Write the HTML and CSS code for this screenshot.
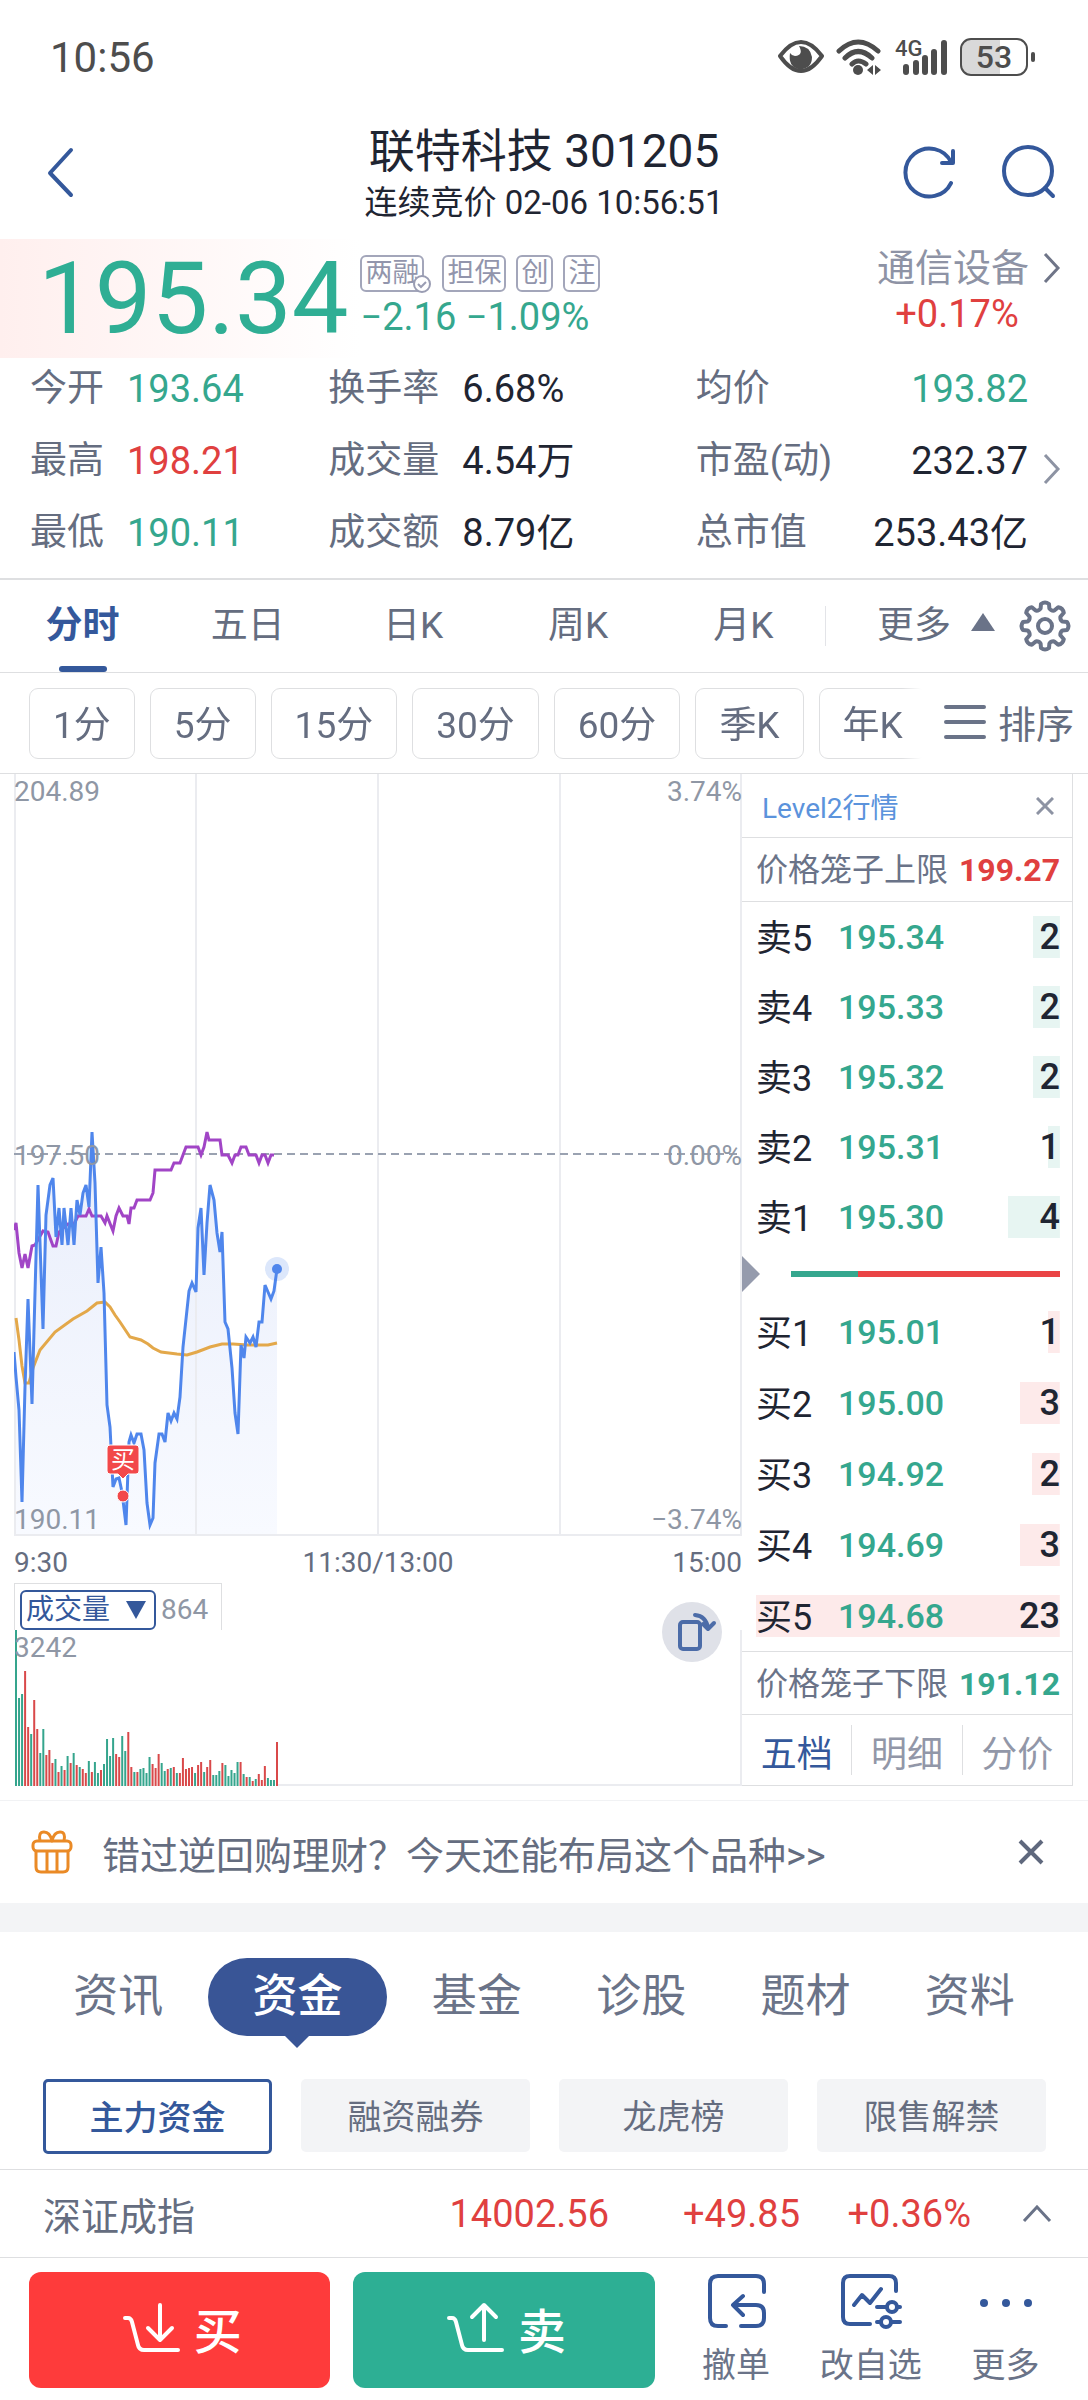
FILE: index.html
```html
<!DOCTYPE html>
<html lang="zh-CN">

<head>
    <meta charset="UTF-8">
    <meta name="viewport" content="width=device-width, initial-scale=1.0">
    <title>联特科技 301205</title>
    <link rel="stylesheet" href="styles.css">
</head>

<body>
<div class="status">
    <span class="clock">10:56</span>
    <div class="status-icons">
        <svg width="46" height="36" viewBox="0 0 46 36" fill="none" stroke="#4d4d4d" stroke-width="4">
            <path d="M2 17Q23-11 44 17Q23 47 2 17z" stroke-linejoin="round"/>
            <path d="M21 7q5 9-4 10-3 0-5-3-2 13 8 16 14 1 14-12Q32 7 21 7z" fill="#4d4d4d" stroke="none"/>
        </svg>
        <svg width="46" height="36" viewBox="0 0 46 36" fill="none" stroke="#4d4d4d" stroke-width="5" stroke-linecap="round">
            <path d="M3 12Q22-6 42 12M9 19Q22 6 36 19M16 25Q22 19 30 25"/>
            <circle cx="22" cy="31" r="5" fill="#4d4d4d" stroke="none"/>
            <path d="M37 26v10l-6-5zM39 26v10l6-5z" fill="#4d4d4d" stroke="none"/>
        </svg>
        <svg width="54" height="44" viewBox="-1 -4 54 44" stroke="#4d4d4d" stroke-width="6" stroke-linecap="round">
            <text class="net" x="0" y="17">4G</text>
            <path d="M11 28v5M21 24v9M30 19v14M39 13v20M49 4v29"/>
        </svg>
        <svg width="76" height="38" viewBox="0 0 76 38">
            <path d="M10 2h30v34H10q-8 0-8-8V10q0-8 8-8z" fill="#d9d9d9"/>
            <rect x="1" y="1" width="66" height="36" rx="10" fill="none" stroke="#4d4d4d" stroke-width="2"/>
            <path d="M73 16v6" stroke="#4d4d4d" stroke-width="4" stroke-linecap="round"/>
            <text class="battery" x="34" y="30">53</text>
        </svg>
    </div>
</div>

<header class="header">
    <button class="icon-btn back" aria-label="返回">
        <svg width="30" height="52" viewBox="0 0 30 52" fill="none" stroke="#34589b" stroke-width="4" stroke-linecap="round" stroke-linejoin="round">
            <path d="M25 3L4 26l21 22"/>
        </svg>
    </button>
    <div class="stock">
        <h1 class="stock-name">联特科技 301205</h1>
        <p class="stock-time">连续竞价 02-06 10:56:51</p>
    </div>
    <div class="header-right">
        <button class="icon-btn" aria-label="刷新">
            <svg width="56" height="56" viewBox="0 0 56 56" fill="none" stroke="#34589b" stroke-width="4" stroke-linejoin="round" stroke-linecap="round">
                <path d="M49 38A24 24 0 1 1 49 17"/>
                <path d="M51 6v12H40"/>
            </svg>
        </button>
        <button class="icon-btn" aria-label="搜索">
            <svg width="56" height="56" viewBox="0 0 56 56" fill="none" stroke="#34589b" stroke-width="4" stroke-linecap="round">
                <circle cx="28" cy="26" r="24"/>
                <path d="M45 43l8 8"/>
            </svg>
        </button>
    </div>
</header>

<section class="price-band">
    <div class="price down">195.34</div>
    <div class="price-info">
        <div class="tags">
            <span class="tag">两融<svg class="tag-check" width="18" height="18" viewBox="0 0 18 18" fill="none" stroke="#9a9db3" stroke-width="2"><circle cx="9" cy="9" r="8" fill="#fff"/><path d="M5 9l3 3 5-5"/></svg></span>
            <span class="tag">担保</span>
            <span class="tag">创</span>
            <span class="tag">注</span>
        </div>
        <div class="change down">−2.16 −1.09%</div>
    </div>
    <a class="industry" href="#">
        <span class="industry-name">通信设备</span>
        <svg width="18" height="32" viewBox="0 0 18 32" fill="none" stroke="#6f7588" stroke-width="3"><path d="M2 2l13 14L2 30"/></svg>
        <span class="industry-rate up">+0.17%</span>
    </a>
</section>

<section class="quote">
    <dl class="quote-grid">
        <div class="q"><dt>今开</dt><dd class="down">193.64</dd></div>
        <div class="q q2"><dt>换手率</dt><dd>6.68%</dd></div>
        <div class="q q3"><dt>均价</dt><dd class="down">193.82</dd></div>
        <div class="q"><dt>最高</dt><dd class="up">198.21</dd></div>
        <div class="q q2"><dt>成交量</dt><dd>4.54万</dd></div>
        <div class="q q3"><dt>市盈(动)</dt><dd>232.37</dd></div>
        <div class="q"><dt>最低</dt><dd class="down">190.11</dd></div>
        <div class="q q2"><dt>成交额</dt><dd>8.79亿</dd></div>
        <div class="q q3"><dt>总市值</dt><dd>253.43亿</dd></div>
    </dl>
    <svg class="quote-more" width="18" height="32" viewBox="0 0 18 32" fill="none" stroke="#8d93a3" stroke-width="3"><path d="M2 2l13 14L2 30"/></svg>
</section>

<nav class="periods">
    <div class="period-list">
        <button class="period active">分时</button>
        <button class="period">五日</button>
        <button class="period">日K</button>
        <button class="period">周K</button>
        <button class="period">月K</button>
    </div>
    <button class="period-more">更多
        <svg width="24" height="18" viewBox="0 0 24 18"><path d="M12 0l12 18H0z" fill="#6a7388"/></svg>
    </button>
    <button class="icon-btn" aria-label="设置">
        <svg width="52" height="52" viewBox="-26 -26 52 52" fill="none" stroke="#6a7388" stroke-width="4" stroke-linejoin="round">
            <path d="M17.5-4.4L22-4Q25 0 22 4L17.5 4.4Q15 6 15.4 9.3L18.8 13.2Q18 18 13.2 18.8L9.3 15.4Q6 15 4.4 17.5L4 22Q0 25-4 22L-4.4 17.5Q-6 15-9.3 15.4L-13.2 18.8Q-18 18-18.8 13.2L-15.4 9.3Q-15 6-17.5 4.4L-22 4Q-25 0-22-4L-17.5-4.4Q-15-6-15.4-9.3L-18.8-13.2Q-18-18-13.2-18.8L-9.3-15.4Q-6-15-4.4-17.5L-4-22Q0-25 4-22L4.4-17.5Q6-15 9.3-15.4L13.2-18.8Q18-18 18.8-13.2L15.4-9.3Q15-6 17.5-4.4z"/>
            <circle r="7"/>
        </svg>
    </button>
</nav>

<div class="minutes">
    <div class="minute-list">
        <button class="minute">1分</button>
        <button class="minute">5分</button>
        <button class="minute">15分</button>
        <button class="minute">30分</button>
        <button class="minute">60分</button>
        <button class="minute">季K</button>
        <button class="minute">年K</button>
    </div>
    <button class="sort">
        <svg width="42" height="34" viewBox="0 0 42 34" stroke="#6a7388" stroke-width="4" stroke-linecap="round"><path d="M2 2h38M2 17h38M2 32h38"/></svg>
        排序
    </button>
</div>

<main class="market">
    <div class="charts">
        <!-- 分时图 -->
        <div class="trend">
            <svg class="trend-svg" viewBox="0 0 728 762" fill="none">
                <defs>
                    <linearGradient id="area" x1="0" y1="0" x2="0" y2="1">
                        <stop offset="0" stop-color="#e9eefb"/>
                        <stop offset="1" stop-color="#f8faff"/>
                    </linearGradient>
                </defs>
                <path id="priceArea" fill="url(#area)"/>
                <path d="M1 0v762M182 0v762M364 0v762M546 0v762M727 0v762M0 761h728" stroke="#ebecf0" stroke-width="2"/>
                <path d="M0 380h728" stroke="#9aa2b1" stroke-width="2" stroke-dasharray="8 5"/>
                <polyline stroke="#e3a84a" stroke-width="3" points="2,544 5,566 8,592 11,609 15,609 19,594 26,576 41,558 59,545 73,537 83,529 91,528 96,533 101,541 106,548 116,563 127,566 134,570 139,574 147,578 163,580 173,581 183,578 196,573 208,570 219,570 233,571 254,571 263,569"/>
                <polyline stroke="#a145c6" stroke-width="3" points="0,456 2,449 5,479 8,494 11,480 14,494 18,472 21,471 29,457 34,458 39,472 42,472 45,458 54,450 60,450 64,442 72,442 75,435 78,442 87,442 91,449 93,442 99,457 102,442 105,434 109,442 113,442 115,450 117,434 120,434 123,426 136,426 139,419 141,396 157,396 160,389 166,389 172,373 184,373 187,381 190,373 193,358 195,366 206,366 208,381 214,381 218,389 221,381 224,381 227,373 232,373 235,381 242,381 245,389 248,381 251,381 254,389 257,381 260,381"/>
                <polyline id="priceLine" stroke="#4f86ec" stroke-width="3" points="0,578 2,603 5,636 8,728 11,613 14,525 18,630 21,519 24,411 29,555 32,441 36,411 39,404 42,463 45,434 48,471 50,434 54,471 57,434 60,471 63,426 66,441 69,419 72,411 75,433 78,358 81,409 84,509 87,473 90,519 93,631 96,653 99,713 102,705 105,704 108,718 112,751 115,668 117,661 120,669 123,660 127,660 130,676 133,729 136,751 139,744 141,689 145,660 148,660 151,668 154,639 157,647 160,639 163,645 166,623 169,573 175,517 178,509 182,518 184,454 187,434 190,501 193,449 196,411 200,426 203,459 206,478 208,458 211,548 214,555 218,594 221,639 224,660 227,571 230,584 232,563 236,569 239,563 242,573 245,548 248,548 251,511 257,525 260,517 263,495"/>
                <circle cx="263" cy="495" r="12" fill="#4f86ec" fill-opacity=".2"/>
                <circle cx="263" cy="495" r="5" fill="#4f86ec"/>
                <path d="M96 671h26q3 0 3 3v23q0 3-3 3h-8l-5 5-5-5h-8q-3 0-3-3v-23q0-3 3-3z" fill="#f2484a" stroke="#fff"/>
                <circle cx="109" cy="722" r="6" fill="#f2484a" stroke="#fff"/>
                <text class="buy-mark" x="109" y="694">买</text>
            </svg>
            <div class="scale scale-left"><span>204.89</span><span>197.50</span><span>190.11</span></div>
            <div class="scale scale-right"><span>3.74%</span><span>0.00%</span><span>−3.74%</span></div>
        </div>
        <div class="times"><span>9:30</span><span>11:30/13:00</span><span>15:00</span></div>
        <!-- 成交量 -->
        <div class="volume">
            <div class="volume-head">
                <label class="volume-select">
                    <select aria-label="指标">
                        <option>成交量</option>
                        <option>成交额</option>
                    </select>
                    <svg width="20" height="18" viewBox="0 0 20 18"><path d="M0 0h20L10 18z" fill="#34589b"/></svg>
                </label>
                <span>864</span>
            </div>
            <div class="volume-body">
                <svg class="volume-svg" viewBox="0 0 728 156"><path d="M727 0v155M264 155h464" stroke="#ebecf0" stroke-width="2" fill="none"/><g id="bars"></g></svg>
                <span class="volume-max">3242</span>
            </div>
            <button class="rotate" aria-label="横屏">
                <svg width="60" height="60" viewBox="0 0 60 60" fill="none" stroke="#4c6ca8" stroke-width="4" stroke-linecap="round" stroke-linejoin="round">
                    <rect x="18" y="20" width="20" height="27" rx="3"/>
                    <path d="M33 13q11 1 13 13M41 22l5 5 6-6"/>
                </svg>
            </button>
        </div>
    </div>

    <!-- 五档盘口 -->
    <aside class="book">
        <div class="level2"><a href="#">Level2行情</a>
            <button class="icon-btn" aria-label="关闭"><svg width="18" height="18" viewBox="0 0 18 18" stroke="#8d93a3" stroke-width="3"><path d="M1 1l16 16M17 1L1 17"/></svg></button>
        </div>
        <div class="cage">价格笼子上限 <b class="up">199.27</b></div>
        <table class="depth sell">
            <tr style="--depth: 9%"><th>卖5</th><td>195.34</td><td>2</td></tr>
            <tr style="--depth: 9%"><th>卖4</th><td>195.33</td><td>2</td></tr>
            <tr style="--depth: 9%"><th>卖3</th><td>195.32</td><td>2</td></tr>
            <tr style="--depth: 4%"><th>卖2</th><td>195.31</td><td>1</td></tr>
            <tr style="--depth: 17%"><th>卖1</th><td>195.30</td><td>4</td></tr>
        </table>
        <div class="ratio">
            <svg width="18" height="36" viewBox="0 0 18 36"><path d="M0 0l18 18L0 36z" fill="#959bad"/></svg>
            <div class="ratio-bar"><div class="ratio-sell" style="width: 25%"></div></div>
        </div>
        <table class="depth buy">
            <tr style="--depth: 4%"><th>买1</th><td>195.01</td><td>1</td></tr>
            <tr style="--depth: 13%"><th>买2</th><td>195.00</td><td>3</td></tr>
            <tr style="--depth: 9%"><th>买3</th><td>194.92</td><td>2</td></tr>
            <tr style="--depth: 13%"><th>买4</th><td>194.69</td><td>3</td></tr>
            <tr style="--depth: 100%"><th>买5</th><td>194.68</td><td>23</td></tr>
        </table>
        <div class="cage cage-bottom">价格笼子下限 <b class="down">191.12</b></div>
        <div class="book-tabs">
            <button class="active">五档</button>
            <button>明细</button>
            <button>分价</button>
        </div>
    </aside>
</main>

<div class="notice">
    <svg width="42" height="44" viewBox="0 0 42 44" fill="none" stroke="#ea8a26" stroke-width="3" stroke-linejoin="round">
        <rect x="2" y="11" width="38" height="10" rx="4"/>
        <path d="M5 21v16q0 5 5 5h22q5 0 5-5V21M16 21v21M26 21v21M9 11Q7 2 13 2q6 0 8 9 2-9 8-9 6 0 4 9"/>
    </svg>
    <a href="#">错过逆回购理财？今天还能布局这个品种&gt;&gt;</a>
    <button class="icon-btn" aria-label="关闭"><svg width="26" height="26" viewBox="0 0 26 26" stroke="#5f687d" stroke-width="4"><path d="M2 2l22 22M24 2L2 24"/></svg></button>
</div>

<nav class="topics">
    <a href="#">资讯</a>
    <a class="active" href="#"><span>资金</span></a>
    <a href="#">基金</a>
    <a href="#">诊股</a>
    <a href="#">题材</a>
    <a href="#">资料</a>
</nav>

<div class="subs">
    <button class="sub active">主力资金</button>
    <button class="sub">融资融券</button>
    <button class="sub">龙虎榜</button>
    <button class="sub">限售解禁</button>
</div>

<div class="index-row">
    <span class="index-name">深证成指</span>
    <span class="up">14002.56</span>
    <span class="index-diff up">+49.85</span>
    <span class="index-rate up">+0.36%</span>
    <button class="icon-btn" aria-label="展开"><svg width="30" height="18" viewBox="0 0 30 18" fill="none" stroke="#6a7388" stroke-width="3"><path d="M2 16L15 2l13 14"/></svg></button>
</div>

<footer class="actions">
    <button class="trade trade-buy">
        <svg width="58" height="54" viewBox="0 0 58 54" fill="none" stroke="#fff" stroke-width="4" stroke-linecap="round" stroke-linejoin="round"><path d="M3 17h3q3 0 4 4l6 23q1 5 6 5h34M38 4v34M26 27l12 12 12-12"/></svg>
        买
    </button>
    <button class="trade trade-sell">
        <svg width="58" height="54" viewBox="0 0 58 54" fill="none" stroke="#fff" stroke-width="4" stroke-linecap="round" stroke-linejoin="round"><path d="M3 17h3q3 0 4 4l6 23q1 5 6 5h34M38 39V5M26 16L38 4l12 12"/></svg>
        卖
    </button>
    <button class="tool">
        <svg width="62" height="58" viewBox="0 0 62 58" fill="none" stroke="#34589b" stroke-width="4" stroke-linecap="round" stroke-linejoin="round"><path d="M21 54h-8q-8 0-8-8V12q0-8 8-8h38q8 0 8 8v8M36 54h15q8 0 8-8v-5q0-8-8-8H29M38 24l-10 9 10 10"/></svg>
        撤单
    </button>
    <button class="tool">
        <svg width="62" height="58" viewBox="0 0 62 58" fill="none" stroke="#34589b" stroke-width="4" stroke-linecap="round" stroke-linejoin="round"><path d="M30 52H10q-7 0-7-7V11q0-7 7-7h39q7 0 7 7v8M14 33l8-10 8 8 11-14M37 35h10M57 35h3M37 50h4M51 50h9"/><circle cx="52" cy="35" r="5"/><circle cx="46" cy="50" r="5"/></svg>
        改自选
    </button>
    <button class="tool">
        <svg width="62" height="58" viewBox="0 0 62 58" fill="#34589b"><circle cx="9" cy="31" r="4"/><circle cx="31" cy="31" r="4"/><circle cx="53" cy="31" r="4"/></svg>
        更多
    </button>
</footer>

<script>
    // 价格线下方的填充
    var line = document.getElementById('priceLine').getAttribute('points');
    document.getElementById('priceArea').setAttribute('d', 'M' + line + ' 263,760 0,760z');

    // 每分钟成交量，负数为下跌
    var volumes = [-156, -88, -92, 115, 59, -52, 86, 57, -33, -57, 31, 36, 23, -27, 14, -20, 16, -30, 23, -33,
        21, -19, 17, 13, -25, 14, -24, -13, 16, -22, -47, -30, -48, 32, 29, -50, -35, 54, 19, -14,
        14, -17, -18, -13, -29, 22, 18, 32, -23, -15, 17, -18, 19, -13, 13, 28, 17, 18, 19, -13,
        21, 24, -14, 19, 26, -11, -11, -15, 23, -21, -10, -16, -13, -24, 24, -12, 9, -9, 5, -7,
        12, 6, 20, -8, -6, -6, 44];
    var bars = '';
    for (var i = 0; i < volumes.length; i++) {
        var h = Math.abs(volumes[i]);
        bars += '<rect x="' + (1 + i * 261 / 86) + '" y="' + (156 - h) + '" width="2" height="' + h +
            '" fill="' + (volumes[i] > 0 ? '#d9494a' : '#35a58d') + '"/>';
    }
    document.getElementById('bars').innerHTML = bars;
</script>
</body>

</html>
```
FILE: styles.css
```css
* {
    margin: 0;
    padding: 0;
    box-sizing: border-box;
}

body {
    background: #fff;
    color: #1f2532;
    font-family: Roboto, "Noto Sans CJK SC", sans-serif;
    font-size: 38px;
}

button,
select {
    border: 0;
    background: none;
    color: inherit;
    font: inherit;
    cursor: pointer;
}

a {
    color: inherit;
    text-decoration: none;
}

svg {
    display: block;
    flex-shrink: 0;
}

.up {
    color: #e0403f;
}

.down {
    color: #35a78e;
}

.icon-btn {
    display: flex;
}

/* 状态栏 */
.status {
    display: flex;
    justify-content: space-between;
    align-items: center;
    height: 114px;
    padding: 0 52px 0 50px;
    color: #4d4d4d;
}

.clock {
    font-size: 42px;
}

.status-icons {
    display: flex;
    align-items: center;
    gap: 12px;
}

.net {
    font-size: 22px;
    font-weight: 500;
    fill: #4d4d4d;
    stroke: none;
}

.battery {
    font-size: 32px;
    font-weight: 500;
    fill: #4d4d4d;
    text-anchor: middle;
}

/* 标题 */
.header {
    display: grid;
    grid-template-columns: 1fr auto 1fr;
    align-items: center;
    padding: 7px 32px 14px;
}

.back {
    padding-left: 14px;
}

.stock {
    text-align: center;
}

.stock-name {
    font-size: 46px;
    font-weight: normal;
    line-height: 60px;
}

.stock-time {
    font-size: 33px;
    line-height: 44px;
}

.header-right {
    display: flex;
    justify-content: flex-end;
    gap: 42px;
}

/* 现价 */
.price-band {
    display: flex;
    align-items: center;
    height: 119px;
    padding: 0 27px 0 38px;
    background: linear-gradient(to right, #ffefee, #fff 360px);
}

.price {
    font-size: 101px;
    line-height: 115px;
    color: #2fae94;
}

.price-info {
    flex: 1;
    padding-left: 12px;
}

.tags {
    display: flex;
    gap: 10px;
}

.tag {
    position: relative;
    height: 37px;
    padding: 0 3px;
    border: 2px solid #a3a6ba;
    border-radius: 6px;
    color: #9295ac;
    font-size: 27px;
    line-height: 32px;
}

.tag:first-child {
    margin-right: 8px;
}

.tag-check {
    position: absolute;
    right: -9px;
    bottom: -3px;
}

.change {
    line-height: 50px;
}

.industry {
    align-self: flex-start;
    display: grid;
    grid-template-columns: auto 18px;
    column-gap: 14px;
    align-items: center;
    padding-top: 4px;
    text-align: center;
}

.industry-name {
    color: #8e93a5;
    line-height: 50px;
}

.industry-rate {
    padding-left: 8px;
    line-height: 42px;
}

/* 报价明细 */
.quote {
    display: flex;
    align-items: center;
    padding: 0 27px 14px 30px;
    border-bottom: 2px solid #dedfe1;
}

.quote-grid {
    flex: 1;
    display: grid;
    grid-template-columns: 298fr 367fr 332fr;
    row-gap: 10px;
    margin-right: 15px;
}

.quote-more {
    margin-top: 16px;
}

.q {
    display: flex;
    line-height: 62px;
}

.q dt {
    width: 97px;
    color: #656d80;
    font-size: 37px;
}

.q2 dt {
    width: 134px;
}

.q3 {
    justify-content: space-between;
}

.q3 dt {
    width: auto;
}

/* 周期 */
.periods {
    display: flex;
    align-items: center;
    height: 93px;
    padding-right: 17px;
    border-bottom: 1px solid #dedfe1;
    color: #656d80;
    font-size: 37px;
}

.period-list {
    flex: 1;
    display: flex;
    background: linear-gradient(#e3e4e8, #e3e4e8) right center / 1px 40px no-repeat;
}

.period {
    position: relative;
    flex: 1;
    height: 92px;
    padding-bottom: 8px;
}

.period.active {
    color: #34589b;
    font-weight: bold;
}

.period.active::after {
    content: "";
    position: absolute;
    left: 50%;
    bottom: 0;
    width: 48px;
    height: 6px;
    margin-left: -24px;
    border-radius: 3px;
    background: #34589b;
}

.period-more {
    display: flex;
    align-items: center;
    gap: 20px;
    padding: 0 24px 8px 51px;
}

.minutes {
    display: flex;
    align-items: center;
    height: 101px;
    padding: 0 14px 0 29px;
    border-bottom: 1px solid #dedfe1;
    color: #656d80;
    font-size: 37px;
}

.minute-list {
    flex: 1;
    display: flex;
    gap: 15px;
    min-width: 0;
    overflow: hidden;
    -webkit-mask: linear-gradient(to left, transparent, #000 20px);
    mask: linear-gradient(to left, transparent, #000 20px);
}

.minute {
    flex-shrink: 0;
    height: 71px;
    padding: 0 23px 3px;
    border: 1px solid #dedfe1;
    border-radius: 9px;
}

.sort {
    display: flex;
    align-items: center;
    gap: 12px;
    padding: 0 0 3px 22px;
    font-size: 38px;
}

/* 行情主体 */
.market {
    display: grid;
    grid-template-columns: 728fr 331fr;
    padding: 0 15px 14px 14px;
    border-bottom: 1px solid #f1f2f4;
}

.trend,
.volume,
.volume-body {
    position: relative;
}

.trend-svg,
.volume-svg {
    width: 100%;
    height: auto;
}

.buy-mark {
    fill: #fff;
    font-size: 24px;
    text-anchor: middle;
}

.scale {
    position: absolute;
    top: 0;
    bottom: 0;
    display: flex;
    flex-direction: column;
    justify-content: space-between;
    padding-top: 2px;
    color: #8f97a5;
    font-size: 28px;
    line-height: 32px;
}

.scale-left {
    left: 0;
}

.scale-right {
    right: 0;
    text-align: right;
}

.times {
    display: grid;
    grid-template-columns: 1fr auto 1fr;
    padding-top: 7px;
    color: #656d80;
    font-size: 28px;
    line-height: 40px;
}

.times span:last-child {
    text-align: right;
}

.volume-head {
    display: flex;
    align-items: center;
    gap: 5px;
    width: 208px;
    height: 47px;
    padding: 5px 0 0 5px;
    border: 1px solid #dedfe1;
    border-bottom: 0;
    color: #8f97a5;
    font-size: 28px;
}

.volume-select {
    position: relative;
    width: 136px;
    height: 40px;
    border: 2px solid #34589b;
    border-radius: 6px;
    color: #34589b;
}

.volume-select select {
    width: 100%;
    height: 100%;
    padding-left: 4px;
    appearance: none;
    -webkit-appearance: none;
}

.volume-select svg {
    position: absolute;
    right: 8px;
    top: 9px;
    pointer-events: none;
}

.volume-max {
    position: absolute;
    left: 0;
    top: 0;
    color: #8f97a5;
    font-size: 28px;
    line-height: 36px;
}

.rotate {
    position: absolute;
    top: 19px;
    right: 20px;
    border-radius: 50%;
    background: #dfe1e8;
}

/* 盘口 */
.book {
    display: flex;
    flex-direction: column;
    border-right: 1px solid #dedfe1;
    border-bottom: 1px solid #dedfe1;
}

.level2 {
    display: flex;
    justify-content: space-between;
    align-items: center;
    height: 64px;
    padding: 0 18px 0 20px;
    border-bottom: 1px solid #dedfe1;
    color: #5b93dc;
    font-size: 28px;
}

.cage {
    display: flex;
    justify-content: space-between;
    height: 64px;
    padding: 0 12px 0 14px;
    border-bottom: 1px solid #dedfe1;
    color: #6a7388;
    font-size: 32px;
    line-height: 64px;
}

.cage-bottom {
    border-top: 1px solid #dedfe1;
}

.depth {
    width: auto;
    margin: 0 12px 0 14px;
    border-collapse: collapse;
    font-size: 36px;
}

.depth tr {
    height: 70px;
    background: linear-gradient(to left, var(--bar) var(--depth), transparent var(--depth)) center / 100% 42px no-repeat;
}

.depth th {
    width: 82px;
    padding-bottom: 4px;
    font-weight: normal;
    text-align: left;
}

.depth td {
    color: #35a78e;
    font-size: 34px;
    font-weight: 500;
}

.depth td:last-child {
    color: #1f2532;
    font-size: 36px;
    text-align: right;
}

.sell {
    --bar: #e7f5f2;
}

.buy {
    --bar: #fdeaea;
}

.buy tr {
    height: 71px;
}

.ratio {
    display: flex;
    align-items: center;
    gap: 31px;
    height: 44px;
    padding-right: 12px;
}

.ratio-bar {
    flex: 1;
    height: 6px;
    background: #ea4445;
}

.ratio-sell {
    height: 6px;
    background: #35a78e;
}

.book-tabs {
    flex: 1;
    display: flex;
    align-items: center;
    color: #9297a8;
    font-size: 36px;
}

.book-tabs button {
    flex: 1;
    height: 50px;
    padding-bottom: 3px;
    border-right: 1px solid #dedfe1;
}

.book-tabs button:last-child {
    border-right: 0;
}

.book-tabs .active {
    color: #34589b;
}

/* 公告 */
.notice {
    display: flex;
    align-items: center;
    gap: 29px;
    height: 102px;
    padding: 0 44px 0 31px;
    color: #656d80;
}

.notice a {
    flex: 1;
}

.topics {
    display: flex;
    padding: 26px 36px 43px;
    border-top: 29px solid #f3f4f6;
    color: #6a7388;
    font-size: 45px;
    line-height: 78px;
    text-align: center;
}

.topics a {
    flex: 165;
}

.topics .active {
    flex: 195;
    color: #fff;
    font-weight: 500;
}

.topics .active span {
    position: relative;
    display: block;
    margin: 0 8px;
    border-radius: 39px;
    background: #395596;
}

.topics .active span::after {
    content: "";
    position: absolute;
    left: 50%;
    top: 100%;
    margin-left: -12px;
    border: 12px solid transparent;
    border-top-color: #395596;
    border-bottom: 0;
}

.subs {
    display: grid;
    grid-template-columns: repeat(4, 1fr);
    align-items: start;
    gap: 29px;
    padding: 0 42px 15px 43px;
    border-bottom: 1px solid #dedfe1;
}

.sub {
    height: 73px;
    padding-bottom: 3px;
    border-radius: 5px;
    background: #f3f4f6;
    color: #656d80;
    font-size: 34px;
}

.sub.active {
    height: 75px;
    border: 3px solid #34589b;
    background: #fff;
    color: #34589b;
    font-weight: 500;
}

.index-row {
    display: flex;
    align-items: center;
    height: 88px;
    padding: 0 36px 0 43px;
    border-bottom: 1px solid #dedfe1;
}

.index-name {
    flex: 1;
    color: #656d80;
}

.index-diff {
    width: 191px;
    text-align: right;
}

.index-rate {
    width: 171px;
    text-align: right;
}

.index-row .icon-btn {
    padding-left: 51px;
}

/* 底部操作 */
.actions {
    display: flex;
    padding: 14px 15px 12px 29px;
}

.trade {
    flex: 300;
    display: flex;
    justify-content: center;
    align-items: center;
    gap: 14px;
    height: 116px;
    margin-right: 23px;
    padding: 0 0 4px 4px;
    border-radius: 12px;
    background: #fe3b3b;
    color: #fff;
    font-size: 48px;
    font-weight: 500;
}

.trade-sell {
    margin-right: 14px;
    background: #2daf94;
}

.tool {
    flex: 136;
    display: flex;
    flex-direction: column;
    align-items: center;
    gap: 12px;
    height: 116px;
    color: #6a7388;
    font-size: 34px;
    line-height: 46px;
}
```
